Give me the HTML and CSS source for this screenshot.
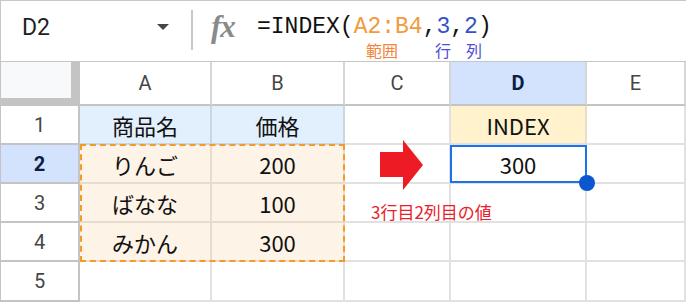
FILE: index.html
```html
<!DOCTYPE html>
<html lang="ja">
<head>
    <meta charset="UTF-8">
    <meta name="viewport" content="width=device-width, initial-scale=1.0">
    <title>INDEX関数</title>
    <link rel="stylesheet" href="styles.css">
</head>
<body>
    <div class="sheet">
        <div class="formula-bar">
            <div class="name-box">
                <span class="cell-ref">D2</span>
                <span class="caret"></span>
            </div>
            <div class="divider"></div>
            <div class="fx">fx</div>
            <div class="formula">
                <div class="formula-text">=INDEX(<span class="arg-range">A2:B4</span>,<span class="arg-num">3</span>,<span class="arg-num">2</span>)</div>
                <div class="formula-notes">
                    <span class="note-range">範囲</span>
                    <span class="note-row">行</span>
                    <span class="note-col">列</span>
                </div>
            </div>
        </div>

        <div class="grid">
            <div class="corner"></div>
            <div class="col-hdr">A</div>
            <div class="col-hdr">B</div>
            <div class="col-hdr">C</div>
            <div class="col-hdr is-active">D</div>
            <div class="col-hdr">E</div>

            <div class="row-hdr">1</div>
            <div class="cell head">商品名</div>
            <div class="cell head">価格</div>
            <div class="cell"></div>
            <div class="cell result-head">INDEX</div>
            <div class="cell"></div>

            <div class="row-hdr is-active">2</div>
            <div class="cell data">りんご</div>
            <div class="cell data">200</div>
            <div class="cell"></div>
            <div class="cell">300</div>
            <div class="cell"></div>

            <div class="row-hdr">3</div>
            <div class="cell data">ばなな</div>
            <div class="cell data">100</div>
            <div class="cell"></div>
            <div class="cell"></div>
            <div class="cell"></div>

            <div class="row-hdr">4</div>
            <div class="cell data">みかん</div>
            <div class="cell data">300</div>
            <div class="cell"></div>
            <div class="cell"></div>
            <div class="cell"></div>

            <div class="row-hdr">5</div>
            <div class="cell"></div>
            <div class="cell"></div>
            <div class="cell"></div>
            <div class="cell"></div>
            <div class="cell"></div>

            <!-- overlays -->
            <div class="range-outline"></div>
            <div class="selection"><span class="handle"></span></div>
            <svg class="arrow" width="46" height="52" viewBox="0 0 46 52">
                <polygon points="2,12 25,12 25,0 45,25 25,50 25,37 2,37" fill="#ed1c24"/>
            </svg>
            <div class="callout">3行目2列目の値</div>
        </div>
    </div>
</body>
</html>
```

FILE: styles.css
```css
* {
    box-sizing: border-box;
}
body {
    margin: 0;
    background-color: #fff;
    font-family: Roboto, "Noto Sans CJK JP", sans-serif;
}
.sheet {
    width: 686px;
    height: 303px;
    overflow: hidden;
}

/* formula bar */
.formula-bar {
    display: flex;
    align-items: flex-start;
    height: 62px;
    border-top: 1px solid #c7c7c7;
    border-left: 1px solid #c7c7c7;
    border-bottom: 1px solid #c4c7c5;
}
.name-box {
    display: flex;
    align-items: center;
    justify-content: space-between;
    width: 190px;
    height: 52px;
    padding: 0 22px 0 21px;
}
.cell-ref {
    font-size: 23px;
    color: #1f1f1f;
}
.caret {
    width: 0;
    height: 0;
    border-left: 6px solid transparent;
    border-right: 6px solid transparent;
    border-top: 6px solid #444746;
}
.divider {
    width: 2px;
    height: 40px;
    margin-top: 9px;
    background-color: #c8c8c8;
}
.fx {
    width: 46px;
    margin: 9px 0 0 18px;
    font-family: "Liberation Serif", serif;
    font-style: italic;
    font-weight: bold;
    font-size: 31px;
    line-height: 34px;
    color: #8a8a8a;
    letter-spacing: -1px;
}
.formula-text {
    margin-top: 11px;
    font-family: "Liberation Mono", monospace;
    font-size: 23px;
    line-height: 30px;
    color: #111;
}
.arg-range {
    color: #f29a3c;
}
.arg-num {
    color: #3553c4;
}
.formula-notes {
    display: flex;
    font-family: "Noto Sans CJK JP", sans-serif;
    font-size: 16px;
    line-height: 16px;
}
.note-range {
    margin-left: 109px;
    color: #f5833a;
}
.note-row {
    margin-left: 37px;
    color: #4d4fd6;
}
.note-col {
    margin-left: 15px;
    color: #4d4fd6;
}

/* grid */
.grid {
    position: relative;
    display: grid;
    grid-template-columns: 80px 132px 133px 106px 136px 99px;
    grid-template-rows: 44px 39px 39px 39px 39px 40px;
}
.corner {
    background-color: #f8f9fa;
    border-left: 1px solid #c4c4c4;
    border-right: 9px solid #c4c4c4;
    border-bottom: 8px solid #c4c4c4;
}
.col-hdr,
.row-hdr,
.cell {
    display: flex;
    align-items: center;
    justify-content: center;
}
.col-hdr {
    font-size: 20px;
    color: #444746;
    border-right: 2px solid #d6d6d6;
    border-bottom: 2px solid #c4c4c4;
}
.row-hdr {
    font-size: 20px;
    color: #444746;
    border-left: 1px solid #c4c4c4;
    border-right: 2px solid #c4c4c4;
    border-bottom: 2px solid #c4c4c4;
}
.col-hdr.is-active,
.row-hdr.is-active {
    background-color: #d3e3fd;
    color: #0b1f44;
    font-weight: bold;
}
.cell {
    font-family: "Noto Sans CJK JP", sans-serif;
    font-size: 22px;
    color: #111;
    border-right: 2px solid #e1e1e1;
    border-bottom: 2px solid #e1e1e1;
}
.cell.head {
    background-color: #e2effc;
    border-right-color: #c9d6e4;
    border-bottom-color: #c9d6e4;
}
.cell.data {
    background-color: #fdf3e6;
    border-right-color: #e6dccf;
    border-bottom-color: #e6dccf;
}
.cell.result-head {
    background-color: #fff2cc;
    border-right-color: #e6dfc6;
}

/* overlays */
.range-outline {
    position: absolute;
    left: 80px;
    top: 82px;
    width: 265px;
    height: 118px;
    border: 2px dashed #f39b26;
}
.selection {
    position: absolute;
    left: 450px;
    top: 83px;
    width: 137px;
    height: 38px;
    border: 2px solid #1a73e8;
}
.handle {
    position: absolute;
    right: -10px;
    bottom: -10px;
    width: 16px;
    height: 16px;
    border-radius: 50%;
    background-color: #0b57d0;
}
.arrow {
    position: absolute;
    left: 378px;
    top: 78px;
}
.callout {
    position: absolute;
    left: 371px;
    top: 140px;
    font-family: "Noto Sans CJK JP", sans-serif;
    font-size: 17px;
    line-height: 20px;
    color: #e8202a;
    white-space: nowrap;
}
```
